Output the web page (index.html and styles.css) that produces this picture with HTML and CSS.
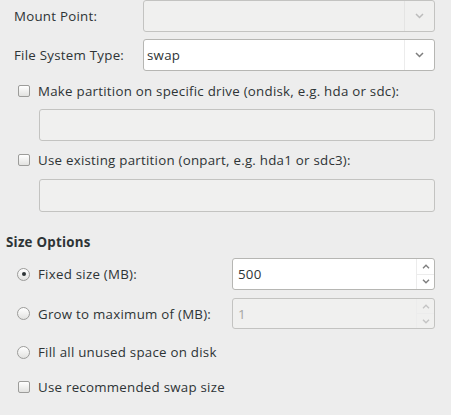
FILE: index.html
```html
<!DOCTYPE html>
<html>
<head>
<meta charset="utf-8">
<link rel="stylesheet" href="styles.css">
</head>
<body>
<div class="page">
  <div class="form-grid">
    <label class="field-label">Mount Point:</label>
    <div class="combo disabled">
      <span class="combo-text"></span>
      <span class="combo-btn"><svg width="9" height="6" viewBox="0 0 9 6"><path d="M1 1 L4.5 4.5 L8 1" fill="none" stroke="#bcbcbc" stroke-width="1.5"/></svg></span>
    </div>
    <label class="field-label">File System Type:</label>
    <div class="combo">
      <span class="combo-text">swap</span>
      <span class="combo-btn"><svg width="9" height="6" viewBox="0 0 9 6"><path d="M1 1 L4.5 4.5 L8 1" fill="none" stroke="#7e7e7e" stroke-width="1.5"/></svg></span>
    </div>
  </div>

  <div class="check-row first"><span class="checkbox"></span><span>Make partition on specific drive (ondisk, e.g. hda or sdc):</span></div>
  <div class="entry disabled"></div>
  <div class="check-row second"><span class="checkbox"></span><span>Use existing partition (onpart, e.g. hda1 or sdc3):</span></div>
  <div class="entry disabled last"></div>

  <div class="section-title">Size Options</div>

  <div class="size-grid">
    <div class="check-row"><span class="radio checked"></span><span>Fixed size (MB):</span></div>
    <div class="spin">
      <span class="spin-text">500</span>
      <span class="spin-btns">
        <span class="spin-btn"><svg width="8" height="5" viewBox="0 0 8 5"><path d="M1 4.2 L4 1.2 L7 4.2" fill="none" stroke="#7e7e7e" stroke-width="1.4"/></svg></span>
        <span class="spin-btn"><svg width="8" height="5" viewBox="0 0 8 5"><path d="M1 0.8 L4 3.8 L7 0.8" fill="none" stroke="#7e7e7e" stroke-width="1.4"/></svg></span>
      </span>
    </div>
    <div class="check-row"><span class="radio"></span><span>Grow to maximum of (MB):</span></div>
    <div class="spin disabled">
      <span class="spin-text">1</span>
      <span class="spin-btns">
        <span class="spin-btn"><svg width="8" height="5" viewBox="0 0 8 5"><path d="M1 4.2 L4 1.2 L7 4.2" fill="none" stroke="#c4c4c4" stroke-width="1.4"/></svg></span>
        <span class="spin-btn"><svg width="8" height="5" viewBox="0 0 8 5"><path d="M1 0.8 L4 3.8 L7 0.8" fill="none" stroke="#c4c4c4" stroke-width="1.4"/></svg></span>
      </span>
    </div>
  </div>

  <div class="check-row fill"><span class="radio"></span><span>Fill all unused space on disk</span></div>
  <div class="check-row rec"><span class="checkbox"></span><span>Use recommended swap size</span></div>
</div>
</body>
</html>
```
FILE: styles.css
```css
html, body {
  margin: 0;
  padding: 0;
  background: #ededed;
}
body {
  font-family: "Open Sans", "DejaVu Sans", sans-serif;
  font-size: 13.3px;
  letter-spacing: 0.25px;
  color: #2e3436;
  width: 451px;
  height: 415px;
  overflow: hidden;
}
.page {
  padding: 0 16px 0 0;
}
.form-grid {
  display: grid;
  grid-template-columns: 129px 1fr;
  row-gap: 7px;
  padding-left: 14px;
  align-items: center;
}
.field-label {
  line-height: 16px;
}
.combo {
  height: 32px;
  box-sizing: border-box;
  border: 1px solid #b6b6b3;
  border-radius: 3px;
  background: #fff;
  display: flex;
  align-items: stretch;
}
.combo.disabled {
  background: #f0f0ef;
  border-color: #c3c3c1;
}
.combo-text {
  flex: 1;
  display: flex;
  align-items: center;
  padding-left: 3px;
}
.combo-btn {
  width: 29px;
  border-left: 1px solid #ececec;
  display: flex;
  align-items: center;
  justify-content: center;
}
.combo.disabled .combo-btn { border-left-color: #e4e4e3; }

.check-row {
  display: flex;
  align-items: center;
  gap: 8px;
  padding-left: 18px;
  line-height: 16px;
}
.check-row.first { margin-top: 12px; }
.check-row.second { margin-top: 11px; }
.checkbox {
  width: 12px;
  height: 12px;
  box-sizing: border-box;
  border: 1px solid #9c9c9a;
  border-radius: 2px;
  background: linear-gradient(#ffffff, #e2e2e0);
  flex: none;
}
.radio {
  width: 13px;
  height: 13px;
  box-sizing: border-box;
  border: 1px solid #9c9c9a;
  border-radius: 50%;
  background: linear-gradient(#ffffff, #e2e2e0);
  flex: none;
  display: flex;
  align-items: center;
  justify-content: center;
  margin-left: -1px;
}
.radio.checked::after {
  content: "";
  width: 4px;
  height: 4px;
  border-radius: 50%;
  background: #2e3436;
}
.entry {
  margin: 10px 0 0 39px;
  height: 32px;
  box-sizing: border-box;
  border: 1px solid #c3c3c1;
  border-radius: 3px;
  background: #fff;
}
.entry.last { margin-top: 11px; height: 33px; }
.entry.disabled { background: #f0f0ef; }

.section-title {
  font-weight: bold;
  padding-left: 6px;
  margin-top: 22px;
  line-height: 16px;
}
.size-grid {
  display: grid;
  grid-template-columns: 232px 1fr;
  row-gap: 8px;
  align-items: center;
  margin-top: 8px;
}
.spin {
  height: 32px;
  box-sizing: border-box;
  border: 1px solid #b6b6b3;
  border-radius: 3px;
  background: #fff;
  display: flex;
}
.spin.disabled {
  background: #f0f0ef;
  border-color: #c3c3c1;
  color: #a5a5a3;
  height: 31px;
}
.spin-text {
  flex: 1;
  display: flex;
  align-items: center;
  padding-left: 5px;
}
.spin-btns {
  width: 17px;
  border-left: 1px solid #ececec;
  display: flex;
  flex-direction: column;
}
.spin-btn {
  flex: 1;
  display: flex;
  align-items: center;
  justify-content: center;
}
.spin-btn + .spin-btn { border-top: 1px solid #ececec; }

.check-row.fill { margin-top: 15px; }
.check-row.rec { margin-top: 19px; }
```
